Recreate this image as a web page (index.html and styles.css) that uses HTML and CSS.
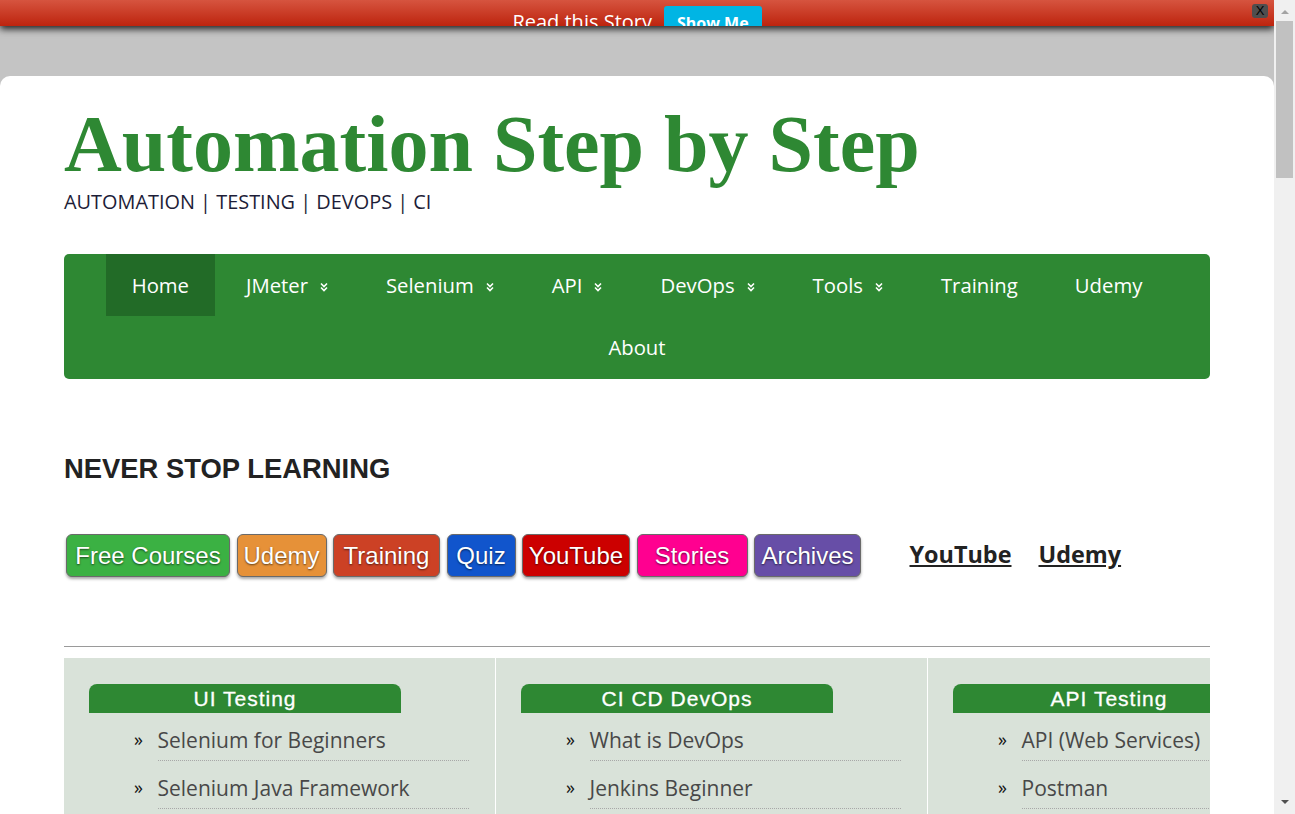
FILE: index.html
```html
<!DOCTYPE html>
<html lang="en">
<head>
<meta charset="utf-8">
<title>Automation Step by Step</title>
<link rel="stylesheet" href="styles.css">
</head>
<body>
<div class="window">
  <div class="page">
    <div class="story-bar">
      <div class="story-inner">
        <span class="story-text">Read this Story</span>
        <a class="story-btn" href="#">Show Me</a>
      </div>
      <span class="story-close">X</span>
    </div>

    <div class="card">
      <header class="site-header">
        <h1 class="site-title">Automation Step by Step</h1>
        <p class="tagline">AUTOMATION <span class="sep">|</span> TESTING <span class="sep">|</span> DEVOPS <span class="sep">|</span> CI</p>
      </header>

      <nav class="main-nav">
        <ul>
          <li class="active"><a href="#">Home</a></li>
          <li><a href="#">JMeter<svg class="chev" viewBox="0 0 10 10"><path d="M2 1.5 L5 4.5 L8 1.5 M2 5.5 L5 8.5 L8 5.5"/></svg></a></li>
          <li><a href="#">Selenium<svg class="chev" viewBox="0 0 10 10"><path d="M2 1.5 L5 4.5 L8 1.5 M2 5.5 L5 8.5 L8 5.5"/></svg></a></li>
          <li><a href="#">API<svg class="chev" viewBox="0 0 10 10"><path d="M2 1.5 L5 4.5 L8 1.5 M2 5.5 L5 8.5 L8 5.5"/></svg></a></li>
          <li><a href="#">DevOps<svg class="chev" viewBox="0 0 10 10"><path d="M2 1.5 L5 4.5 L8 1.5 M2 5.5 L5 8.5 L8 5.5"/></svg></a></li>
          <li><a href="#">Tools<svg class="chev" viewBox="0 0 10 10"><path d="M2 1.5 L5 4.5 L8 1.5 M2 5.5 L5 8.5 L8 5.5"/></svg></a></li>
          <li><a href="#">Training</a></li>
          <li><a href="#">Udemy</a></li>
          <li><a href="#">About</a></li>
        </ul>
      </nav>

      <h2 class="learn-title">NEVER STOP LEARNING</h2>

      <div class="quick-links">
        <a class="pill pill-free" href="#">Free Courses</a>
        <a class="pill pill-udemy" href="#">Udemy</a>
        <a class="pill pill-training" href="#">Training</a>
        <a class="pill pill-quiz" href="#">Quiz</a>
        <a class="pill pill-youtube" href="#">YouTube</a>
        <a class="pill pill-stories" href="#">Stories</a>
        <a class="pill pill-archives" href="#">Archives</a>
        <div class="text-links">
          <a href="#">YouTube</a>
          <a href="#">Udemy</a>
        </div>
      </div>

      <hr class="divider">

      <div class="topics">
        <section class="topic">
          <h3 class="topic-head">UI Testing</h3>
          <ul class="topic-list">
            <li><span class="bullet">»</span><a href="#">Selenium for Beginners</a></li>
            <li><span class="bullet">»</span><a href="#">Selenium Java Framework</a></li>
            <li><span class="bullet">»</span><a href="#">Selenium Python</a></li>
            <li><span class="bullet">»</span><a href="#">Katalon Studio</a></li>
          </ul>
        </section>
        <section class="topic">
          <h3 class="topic-head">CI CD DevOps</h3>
          <ul class="topic-list">
            <li><span class="bullet">»</span><a href="#">What is DevOps</a></li>
            <li><span class="bullet">»</span><a href="#">Jenkins Beginner</a></li>
            <li><span class="bullet">»</span><a href="#">Jenkins Pipeline</a></li>
            <li><span class="bullet">»</span><a href="#">Docker</a></li>
          </ul>
        </section>
        <section class="topic">
          <h3 class="topic-head">API Testing</h3>
          <ul class="topic-list">
            <li><span class="bullet">»</span><a href="#">API (Web Services)</a></li>
            <li><span class="bullet">»</span><a href="#">Postman</a></li>
            <li><span class="bullet">»</span><a href="#">Rest Assured</a></li>
            <li><span class="bullet">»</span><a href="#">SoapUI</a></li>
          </ul>
        </section>
      </div>
    </div>
  </div>

  <div class="scrollbar" aria-hidden="true">
    <span class="sb-up"></span>
    <span class="sb-thumb"></span>
    <span class="sb-down"></span>
  </div>
</div>
</body>
</html>
```

FILE: styles.css
```css
html, body {
  margin: 0;
  height: 100%;
  overflow: hidden;
}

body {
  font-family: "Open Sans", "Noto Sans", sans-serif;
  background: #c4c4c4;
}

.window {
  display: flex;
  height: 100vh;
}

.page {
  flex: 1;
  min-width: 0;
  overflow: hidden;
  display: flex;
  flex-direction: column;
}

/* ---------- story notification bar ---------- */
.story-bar {
  position: relative;
  z-index: 2;
  flex: none;
  height: 26px;
  overflow: hidden;
  background: linear-gradient(#d6543f, #bd240e);
  box-shadow: 0 3px 7px rgba(0, 0, 0, 0.85);
}

.story-inner {
  display: flex;
  justify-content: center;
  align-items: baseline;
  gap: 12px;
  padding-top: 6px;
}

.story-text {
  color: #fff;
  font-size: 20px;
  line-height: 27px;
}

.story-btn {
  background: #00b5e4;
  color: #fff;
  font-weight: 700;
  font-size: 16px;
  line-height: 22px;
  padding: 6px 13px;
  border-radius: 3px;
  text-decoration: none;
}

.story-close {
  position: absolute;
  top: 4px;
  right: 6px;
  width: 16px;
  height: 14px;
  border-radius: 3px;
  background: #4e4e4e;
  color: #000;
  font: 13px/14px "Liberation Sans", sans-serif;
  text-align: center;
}

/* ---------- white card ---------- */
.card {
  flex: 1;
  margin-top: 50px;
  background: #fff;
  border-radius: 10px 10px 0 0;
  padding: 28px 64px 0;
}

.site-title {
  margin: 0;
  font: 700 80px/80px "Liberation Serif", serif;
  color: #2e8833;
}

.tagline {
  margin: 5px 0 0;
  font-size: 19.9px;
  line-height: 26px;
  color: #1d1d38;
}

/* ---------- main navigation ---------- */
.main-nav {
  margin-top: 39px;
  background: #2e8833;
  border-radius: 5px;
}

.main-nav ul {
  display: flex;
  flex-wrap: wrap;
  justify-content: center;
  column-gap: 5px;
  margin: 0;
  padding: 0 0 1px;
  list-style: none;
}

.main-nav a {
  display: flex;
  align-items: center;
  height: 62px;
  padding: 0 26px;
  color: #fff;
  font-size: 20.3px;
  text-decoration: none;
}

.main-nav .active a {
  background: #226b27;
}

.chev {
  width: 10px;
  height: 10px;
  margin-left: 11px;
  margin-top: 3px;
  fill: none;
  stroke: #fff;
  stroke-width: 1.6;
}

/* ---------- never stop learning ---------- */
.learn-title {
  margin: 74px 0 0;
  font: 700 27.4px/32px "Liberation Sans", Arial, sans-serif;
  color: #222;
}

.quick-links {
  display: flex;
  align-items: center;
  margin-top: 49px;
  padding-left: 2px;
}

.pill {
  box-sizing: border-box;
  height: 43px;
  margin-right: 6.5px;
  padding-top: 1px;
  border: 1px solid #6a6a6a;
  border-radius: 6px;
  color: #fff;
  font: 24px/40px "Liberation Sans", Arial, sans-serif;
  text-align: center;
  text-decoration: none;
  text-shadow: 0 1px 2px rgba(0, 0, 0, 0.6);
  box-shadow: 0 2px 3px rgba(0, 0, 0, 0.35);
}

.pill-free { width: 164px; background: #3bb143; }
.pill-udemy { width: 90px; background: #e69138; }
.pill-training { width: 107px; background: #cc4125; }
.pill-quiz { width: 69px; background: #1155cc; }
.pill-youtube { width: 108px; background: #cc0000; }
.pill-stories { width: 111px; background: #ff0090; }
.pill-archives { width: 107px; background: #674ea7; }

.text-links {
  display: flex;
  gap: 27px;
  margin-left: 42px;
  margin-bottom: 3px;
}

.text-links a {
  color: #222;
  font-weight: 700;
  font-size: 23.4px;
  text-decoration: underline;
}

.divider {
  margin: 69px 0 0;
  height: 0;
  border: 0;
  border-top: 1px solid #9a9a9a;
}

/* ---------- topic columns ---------- */
.topics {
  display: grid;
  grid-template-columns: repeat(3, 431px);
  column-gap: 1px;
  margin-top: 11px;
  overflow: hidden;
  background: #fff;
}

.topic {
  background: #d9e2d9;
  padding: 26px 26px 24px 25px;
  min-width: 0;
}

.topic-head {
  width: 312px;
  margin: 0;
  background: #2e8833;
  border-radius: 8px 8px 0 0;
  color: #fff;
  font: 400 21px/29px "Liberation Sans", Arial, sans-serif;
  letter-spacing: 1px;
  text-align: center;
  white-space: nowrap;
  -webkit-text-stroke: 0.3px #fff;
}

.topic-list {
  margin: 0;
  padding: 0 0 0 45px;
  list-style: none;
}

.topic-list li {
  display: flex;
}

.bullet {
  flex: none;
  width: 23.5px;
  padding-top: 13px;
  line-height: 27px;
  font-size: 18px;
  color: #111;
}

.topic-list a {
  flex: 1;
  padding: 13px 0 6px;
  line-height: 28px;
  font-size: 21px;
  color: #484848;
  text-decoration: none;
  white-space: nowrap;
  border-bottom: 1px dotted #a8a8a8;
}

/* ---------- scrollbar ---------- */
.scrollbar {
  flex: none;
  width: 21px;
  background: #f0f0f0;
  display: flex;
  flex-direction: column;
  align-items: center;
}

.sb-up {
  margin-top: 10px;
  border-left: 4px solid transparent;
  border-right: 4px solid transparent;
  border-bottom: 4px solid #a3a3a3;
}

.sb-thumb {
  width: 17px;
  height: 157px;
  margin-top: 7px;
  background: #c1c1c1;
}

.sb-down {
  margin-top: auto;
  margin-bottom: 10px;
  border-left: 4px solid transparent;
  border-right: 4px solid transparent;
  border-top: 4px solid #505050;
}
```
